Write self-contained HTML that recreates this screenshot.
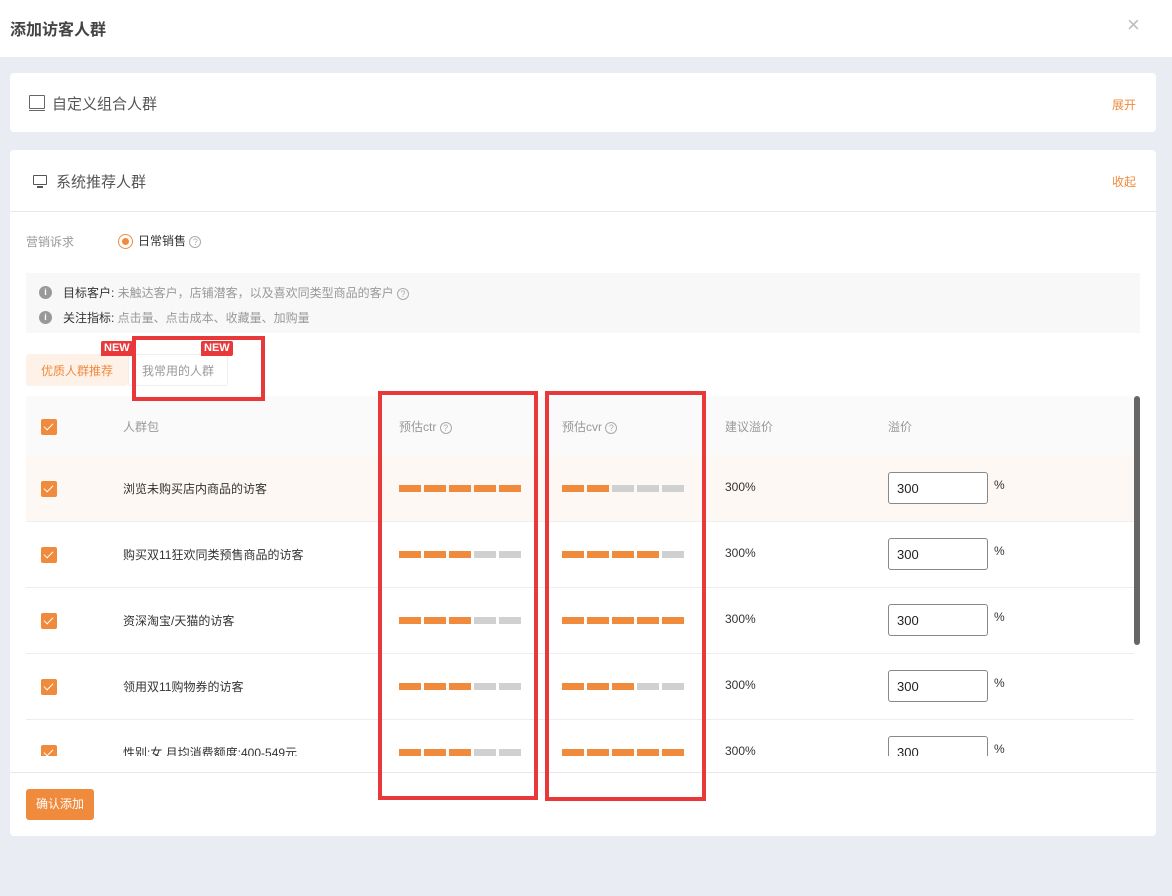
<!DOCTYPE html><html><head><meta charset="utf-8"><style>
*{margin:0;padding:0;box-sizing:border-box}
body{width:1172px;height:896px;background:#e9ecf3;font-family:"Liberation Sans","Noto Sans CJK SC",sans-serif;position:relative;overflow:hidden;color:#333}
.a{position:absolute}
.card{position:absolute;background:#fff;border-radius:4px;left:10px;width:1146px}
.t{font-size:12px;white-space:nowrap}
.cb{position:absolute;left:41px;width:16px;height:16px;background:#f08a3c;border-radius:2px}
.cb:after{content:"";position:absolute;left:5px;top:2px;width:4px;height:8px;border:solid #fff;border-width:0 1.5px 1.5px 0;transform:rotate(45deg)}
.bars{position:absolute;display:flex;gap:3px}
.bars i{display:block;width:22px;height:7px;background:#d0d0d0}
.bars i.o{background:#f08a3c}
.inp{position:absolute;left:888px;width:100px;height:32px;border:1px solid #888;border-radius:3px;background:#fff;font-size:13px;padding:8px 8px;color:#222}
.red{position:absolute;border:4px solid #e8383a}
.q{display:inline-block;width:12px;height:12px;border:1px solid #aaa;border-radius:50%;font-size:9px;line-height:10px;text-align:center;color:#aaa;vertical-align:middle}
.new{position:absolute;background:#e8383a;color:#fff;font-size:11px;font-weight:bold;padding:1px 3px;border-radius:2px 2px 2px 0;line-height:13px}
</style></head><body>
<div class="a" style="left:0;top:0;width:1172px;height:57px;background:#fff"></div>
<div class="a" style="left:10px;top:16px;font-size:16px;color:#444;font-weight:bold">添加访客人群</div>
<div class="a" style="left:1127px;top:12px;font-size:22px;color:#bbb">×</div>

<div class="card" style="top:73px;height:59px"></div>
<div class="a" style="left:29px;top:95px;width:16px;height:14px;border:1.2px solid #666;border-radius:1px"></div>
<div class="a" style="left:29px;top:110px;width:16px;height:1px;background:#666"></div>
<div class="a" style="left:52px;top:93px;font-size:15px;color:#555">自定义组合人群</div>
<div class="a t" style="left:1112px;top:96px;color:#f08a3c">展开</div>

<div class="card" style="top:150px;height:686px"></div>
<div class="a" style="left:33px;top:175px;width:14px;height:10px;border:1.5px solid #555;border-radius:1px"></div>
<div class="a" style="left:37px;top:186px;width:6px;height:2px;background:#555"></div>
<div class="a" style="left:56px;top:171px;font-size:15px;color:#555">系统推荐人群</div>
<div class="a t" style="left:1112px;top:173px;color:#f08a3c">收起</div>
<div class="a" style="left:10px;top:211px;width:1146px;height:1px;background:#e8e8e8"></div>

<div class="a t" style="left:26px;top:233px;color:#999">营销诉求</div>
<div class="a" style="left:118px;top:234px;width:15px;height:15px;border:1px solid #f08a3c;border-radius:50%"></div>
<div class="a" style="left:122px;top:238px;width:7px;height:7px;background:#f08a3c;border-radius:50%"></div>
<div class="a t" style="left:138px;top:232px;color:#333">日常销售 <span class="q">?</span></div>

<div class="a" style="left:26px;top:273px;width:1114px;height:60px;background:#f8f8f8"></div>
<div class="a" style="left:39px;top:286px;width:13px;height:13px;border-radius:50%;background:#999;color:#fff;font-size:9px;text-align:center;line-height:13px;font-weight:bold">i</div>
<div class="a" style="left:39px;top:311px;width:13px;height:13px;border-radius:50%;background:#999;color:#fff;font-size:9px;text-align:center;line-height:13px;font-weight:bold">i</div>
<div class="a t" style="left:63px;top:284px;color:#333;font-size:12px">目标客户: <span style="color:#999">未触达客户，店铺潜客，以及喜欢同类型商品的客户</span> <span class="q">?</span></div>
<div class="a t" style="left:63px;top:309px;color:#333;font-size:12px">关注指标: <span style="color:#999">点击量、点击成本、收藏量、加购量</span></div>

<div class="a" style="left:26px;top:354px;width:102px;height:32px;background:#fdf1e8;border-radius:3px"></div>
<div class="a t" style="left:41px;top:362px;color:#f08a3c">优质人群推荐</div>
<div class="a" style="left:128px;top:354px;width:100px;height:32px;border:1px solid #eee;border-radius:3px;background:#fff"></div>
<div class="a t" style="left:142px;top:362px;color:#999">我常用的人群</div>
<div class="new" style="left:101px;top:341px">NEW</div>
<div class="new" style="left:201px;top:341px">NEW</div>

<div class="a" style="left:26px;top:396px;width:1108px;height:360px;overflow:hidden">
 <div class="a" style="left:0;top:0;width:1108px;height:60px;background:#fafafa"></div>
 <div class="a" style="left:0;top:60px;width:1108px;height:65px;background:#fdf8f3"></div>
 <div class="a" style="left:0;top:125px;width:1108px;height:1px;background:#eee"></div>
 <div class="a" style="left:0;top:191px;width:1108px;height:1px;background:#eee"></div>
 <div class="a" style="left:0;top:257px;width:1108px;height:1px;background:#eee"></div>
 <div class="a" style="left:0;top:323px;width:1108px;height:1px;background:#eee"></div>
</div>
<div class="cb" style="top:419px"></div>
<div class="a t" style="left:123px;top:418px;color:#999">人群包</div>
<div class="a t" style="left:399px;top:418px;color:#999">预估ctr <span class="q">?</span></div>
<div class="a t" style="left:562px;top:418px;color:#999">预估cvr <span class="q">?</span></div>
<div class="a t" style="left:725px;top:418px;color:#999">建议溢价</div>
<div class="a t" style="left:888px;top:418px;color:#999">溢价</div>

<div class="a" style="left:26px;top:456px;width:1108px;height:300px;overflow:hidden">
 <div style="position:absolute;left:-26px;top:-456px;width:1172px;height:896px">
  <div class="cb" style="top:481px"></div><div class="a t" style="left:123px;top:480px">浏览未购买店内商品的访客</div>
  <div class="bars" style="left:399px;top:485px"><i class="o"></i><i class="o"></i><i class="o"></i><i class="o"></i><i class="o"></i></div>
  <div class="bars" style="left:562px;top:485px"><i class="o"></i><i class="o"></i><i></i><i></i><i></i></div>
  <div class="a t" style="left:725px;top:480px">300%</div><div class="inp" style="top:472px">300</div><div class="a t" style="left:994px;top:478px">%</div>

  <div class="cb" style="top:547px"></div><div class="a t" style="left:123px;top:546px">购买双11狂欢同类预售商品的访客</div>
  <div class="bars" style="left:399px;top:551px"><i class="o"></i><i class="o"></i><i class="o"></i><i></i><i></i></div>
  <div class="bars" style="left:562px;top:551px"><i class="o"></i><i class="o"></i><i class="o"></i><i class="o"></i><i></i></div>
  <div class="a t" style="left:725px;top:546px">300%</div><div class="inp" style="top:538px">300</div><div class="a t" style="left:994px;top:544px">%</div>

  <div class="cb" style="top:613px"></div><div class="a t" style="left:123px;top:612px">资深淘宝/天猫的访客</div>
  <div class="bars" style="left:399px;top:617px"><i class="o"></i><i class="o"></i><i class="o"></i><i></i><i></i></div>
  <div class="bars" style="left:562px;top:617px"><i class="o"></i><i class="o"></i><i class="o"></i><i class="o"></i><i class="o"></i></div>
  <div class="a t" style="left:725px;top:612px">300%</div><div class="inp" style="top:604px">300</div><div class="a t" style="left:994px;top:610px">%</div>

  <div class="cb" style="top:679px"></div><div class="a t" style="left:123px;top:678px">领用双11购物券的访客</div>
  <div class="bars" style="left:399px;top:683px"><i class="o"></i><i class="o"></i><i class="o"></i><i></i><i></i></div>
  <div class="bars" style="left:562px;top:683px"><i class="o"></i><i class="o"></i><i class="o"></i><i></i><i></i></div>
  <div class="a t" style="left:725px;top:678px">300%</div><div class="inp" style="top:670px">300</div><div class="a t" style="left:994px;top:676px">%</div>

  <div class="cb" style="top:745px"></div><div class="a t" style="left:123px;top:744px">性别:女  月均消费额度:400-549元</div>
  <div class="bars" style="left:399px;top:749px"><i class="o"></i><i class="o"></i><i class="o"></i><i></i><i></i></div>
  <div class="bars" style="left:562px;top:749px"><i class="o"></i><i class="o"></i><i class="o"></i><i class="o"></i><i class="o"></i></div>
  <div class="a t" style="left:725px;top:744px">300%</div><div class="inp" style="top:736px">300</div><div class="a t" style="left:994px;top:742px">%</div>
 </div>
</div>
<div class="a" style="left:1134px;top:396px;width:6px;height:249px;background:#666;border-radius:3px"></div>

<div class="a" style="left:10px;top:772px;width:1146px;height:1px;background:#e8e8e8"></div>
<div class="a" style="left:26px;top:789px;width:68px;height:31px;background:#f08a3c;border-radius:3px;font-size:12px;text-align:center;line-height:31px;color:#fff">确认添加</div>

<div class="red" style="left:132px;top:336px;width:133px;height:65px"></div>
<div class="red" style="left:378px;top:391px;width:160px;height:409px"></div>
<div class="red" style="left:545px;top:391px;width:161px;height:410px"></div>
</body></html>
